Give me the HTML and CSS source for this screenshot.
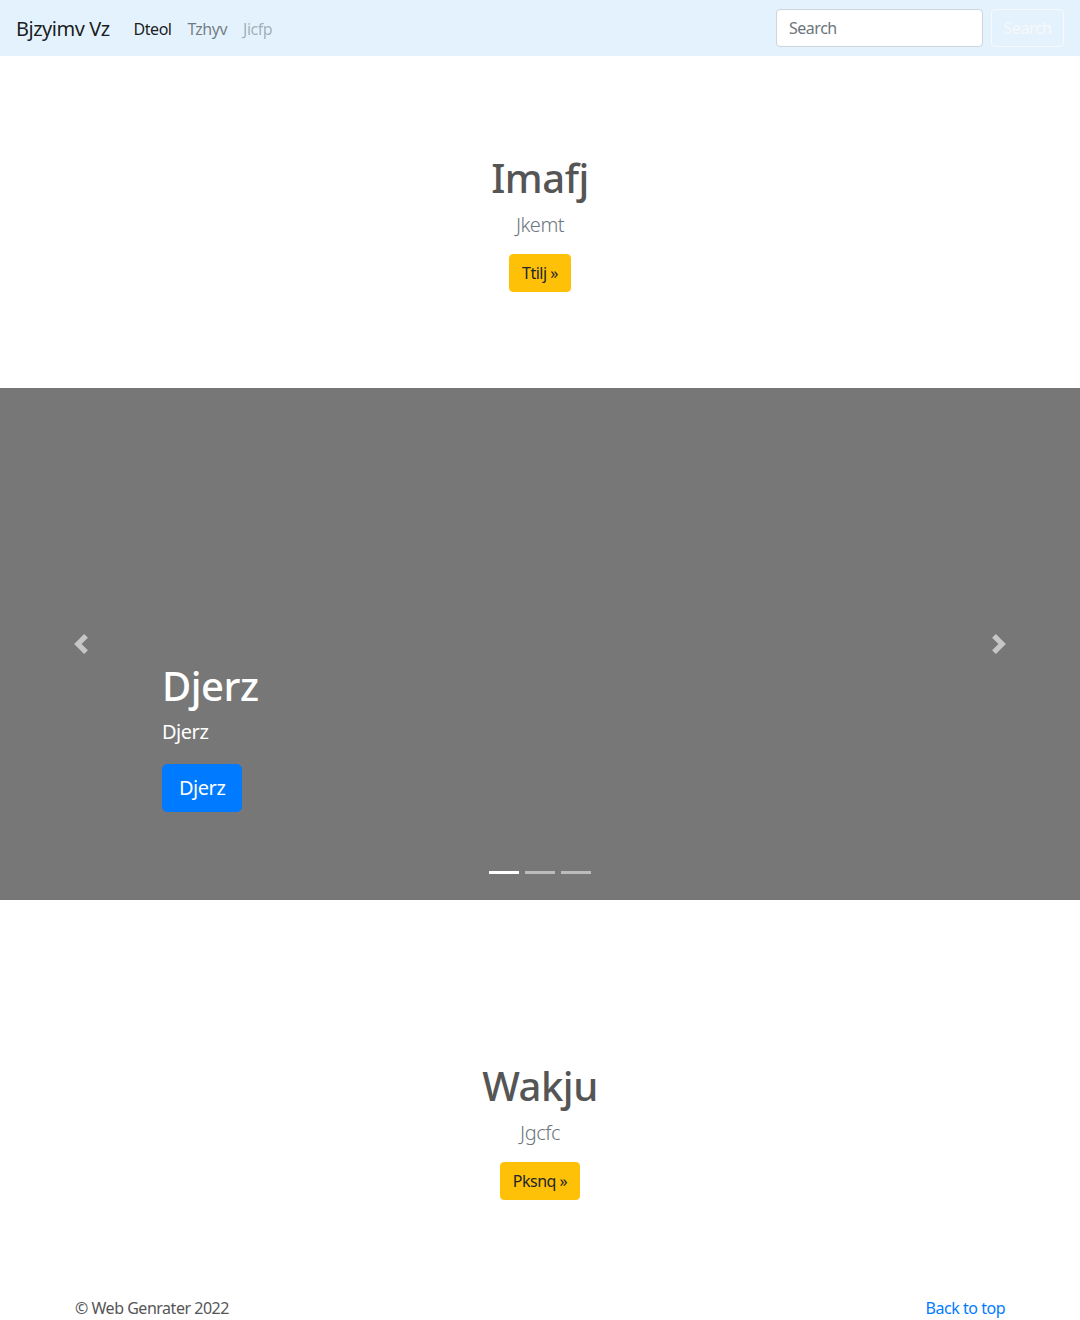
FILE: index.html
```html
<!DOCTYPE html>
<html lang="en">
<head>
<meta charset="utf-8">
<title>Bjzyimv Vz</title>
<link rel="stylesheet" href="styles.css">
</head>
<body>
<nav class="navbar">
  <a class="brand" href="#">Bjzyimv Vz</a>
  <ul class="nav">
    <li><a class="nav-link active" href="#">Dteol</a></li>
    <li><a class="nav-link" href="#">Tzhyv</a></li>
    <li><a class="nav-link disabled" href="#">Jicfp</a></li>
  </ul>
  <form class="search">
    <input class="search-input" type="text" placeholder="Search">
    <button class="search-btn" type="button">Search</button>
  </form>
</nav>

<section class="hero hero-top">
  <h1 class="hero-title">Imafj</h1>
  <p class="lead">Jkemt</p>
  <p><a class="btn btn-warning" href="#">Ttilj &raquo;</a></p>
</section>

<section class="carousel">
  <a class="ctrl ctrl-prev" href="#">
    <svg width="20" height="20" viewBox="0 0 8 8"><path fill="#c6c6c6" d="M5.25 0l-4 4 4 4 1.5-1.5L4.25 4l2.5-2.5L5.25 0z"/></svg>
  </a>
  <div class="caption">
    <h1 class="caption-title">Djerz</h1>
    <p class="caption-text">Djerz</p>
    <p><a class="btn btn-primary btn-lg" href="#">Djerz</a></p>
  </div>
  <a class="ctrl ctrl-next" href="#">
    <svg width="20" height="20" viewBox="0 0 8 8"><path fill="#c6c6c6" d="M2.75 0l-1.5 1.5L3.75 4l-2.5 2.5L2.75 8l4-4-4-4z"/></svg>
  </a>
  <ol class="indicators">
    <li class="on"></li>
    <li></li>
    <li></li>
  </ol>
</section>

<section class="hero hero-bottom">
  <h1 class="hero-title">Wakju</h1>
  <p class="lead">Jgcfc</p>
  <p><a class="btn btn-warning" href="#">Pksnq &raquo;</a></p>
</section>

<footer class="footer">
  <p>&copy; Web Genrater 2022</p>
  <a class="top-link" href="#">Back to top</a>
</footer>
</body>
</html>
```
FILE: styles.css
```css
* { box-sizing: border-box; }
html, body { margin: 0; padding: 0; }
body {
  font-family: "Noto Sans", "Open Sans", "Liberation Sans", sans-serif;
  font-size: 16px;
  line-height: 1.5;
  color: #212529;
  background: #fff;
  letter-spacing: -0.03em;
}
a { text-decoration: none; }
p { margin: 0; }

.navbar {
  height: 56px;
  background: #e3f2fd;
  display: flex;
  align-items: center;
  padding: 1px 16px 0;
}
.brand {
  font-size: 20px;
  color: rgba(0,0,0,.9);
  margin-right: 16px;
  line-height: 30px;
}
.nav {
  list-style: none;
  margin: 0;
  padding: 0;
  display: flex;
  flex: 1;
}
.nav-link {
  display: block;
  padding: 8px;
  color: rgba(0,0,0,.5);
}
.nav-link.active { color: rgba(0,0,0,.9); }
.nav-link.disabled { color: rgba(0,0,0,.3); }
.search { display: flex; align-items: center; margin-top: -1px; }
.search-input {
  width: 207px;
  height: 38px;
  padding: 6px 12px;
  font: inherit;
  font-size: 16px;
  letter-spacing: -0.03em;
  color: #495057;
  border: 1px solid #ced4da;
  border-radius: 4px;
  background: #fff;
  margin-right: 8px;
}
.search-input::placeholder { color: #6c757d; }
.search-btn {
  height: 38px;
  width: 73px;
  font: inherit;
  font-size: 16px;
  letter-spacing: -0.03em;
  color: #f8f9fa;
  background: transparent;
  border: 1px solid #f8f9fa;
  border-radius: 4px;
  padding: 6px 10px;
}

.hero {
  text-align: center;
  display: flex;
  flex-direction: column;
  align-items: center;
}
.hero-top { height: 332px; padding-top: 98px; }
.hero-bottom { height: 348px; padding-top: 162px; }
.hero-title {
  margin: 0 0 8px;
  font-size: 40px;
  font-weight: 500;
  line-height: 48px;
  color: #555;
}
.lead {
  font-size: 20px;
  font-weight: 300;
  line-height: 30px;
  color: #6c757d;
  margin-bottom: 14px;
}
.btn {
  display: inline-block;
  border-radius: 4px;
  padding: 6px 12px;
  font-size: 16px;
  line-height: 24px;
  border: 1px solid transparent;
}
.btn-warning {
  background: #ffc107;
  border-color: #ffc107;
  color: #212529;
}
.btn-primary {
  background: #007bff;
  border-color: #007bff;
  color: #fff;
}
.btn-lg {
  font-size: 20px;
  line-height: 30px;
  padding: 8px 16px;
  border-radius: 5px;
}

.carousel {
  position: relative;
  height: 512px;
  background: #777;
}
.ctrl {
  position: absolute;
  top: 0;
  bottom: 0;
  width: 15%;
  display: flex;
  align-items: center;
  justify-content: center;
}
.ctrl-prev { left: 0; }
.ctrl-next { right: 0; }
.ctrl svg { display: block; }
.caption {
  position: absolute;
  left: 15%;
  right: 15%;
  bottom: 88px;
  color: #fff;
  text-align: left;
}
.caption-title {
  margin: 0 0 7px;
  font-size: 40px;
  font-weight: 500;
  line-height: 48px;
}
.caption-text {
  font-size: 20px;
  line-height: 30px;
  margin-bottom: 17px;
}
.indicators {
  position: absolute;
  left: 0;
  right: 0;
  bottom: 26px;
  margin: 0;
  padding: 0;
  list-style: none;
  display: flex;
  justify-content: center;
  gap: 6px;
}
.indicators li {
  width: 30px;
  height: 3px;
  background: #fff;
  opacity: .5;
}
.indicators li.on { opacity: 1; }

.footer {
  width: 960px;
  margin: 0 auto;
  padding: 48px 15px 0;
  display: flex;
  justify-content: space-between;
  align-items: flex-start;
  height: 72px;
  color: #555;
}
.top-link { color: #007bff; }
```
